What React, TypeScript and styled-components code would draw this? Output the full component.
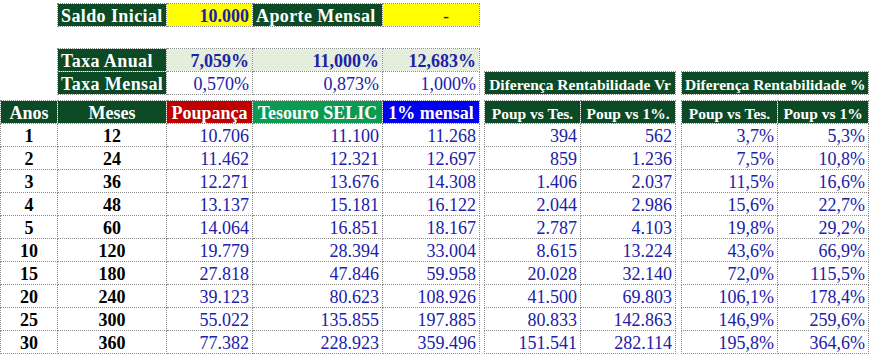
import React from 'react';
import styled, { createGlobalStyle } from 'styled-components';

const GlobalStyle = createGlobalStyle`
  body {
    margin: 0;
    background: #ffffff;
    font-family: 'Liberation Serif', 'Times New Roman', serif;
  }
`;

const DARK_GREEN = '#0b4a25';
const NAVY = '#2020a8';

type Row = [number, number, string, string, string, string, string, string, string];

const rows: Row[] = [
  [1, 12, '10.706', '11.100', '11.268', '394', '562', '3,7%', '5,3%'],
  [2, 24, '11.462', '12.321', '12.697', '859', '1.236', '7,5%', '10,8%'],
  [3, 36, '12.271', '13.676', '14.308', '1.406', '2.037', '11,5%', '16,6%'],
  [4, 48, '13.137', '15.181', '16.122', '2.044', '2.986', '15,6%', '22,7%'],
  [5, 60, '14.064', '16.851', '18.167', '2.787', '4.103', '19,8%', '29,2%'],
  [10, 120, '19.779', '28.394', '33.004', '8.615', '13.224', '43,6%', '66,9%'],
  [15, 180, '27.818', '47.846', '59.958', '20.028', '32.140', '72,0%', '115,5%'],
  [20, 240, '39.123', '80.623', '108.926', '41.500', '69.803', '106,1%', '178,4%'],
  [25, 300, '55.022', '135.855', '197.885', '80.833', '142.863', '146,9%', '259,6%'],
  [30, 360, '77.382', '228.923', '359.496', '151.541', '282.114', '195,8%', '364,6%'],
];

const widths = [57, 109, 86, 130, 97, 5, 96, 95, 6, 96, 91];

const App = () => {
  return (
    <>
      <GlobalStyle />
      <Sheet>
        <colgroup>
          {widths.map((w, i) => (
            <col key={i} style={{ width: w }} />
          ))}
        </colgroup>
        <tbody>
          <SheetRow $h={23}>
            <Blank />
            <Label>Saldo Inicial</Label>
            <Value $fill="#ffff00" $bold>10.000</Value>
            <Label>Aporte Mensal</Label>
            <Value $fill="#ffff00" $pad={30}>-</Value>
            <Blank colSpan={6} />
          </SheetRow>
          <SheetRow $h={22}>
            <Blank colSpan={11} />
          </SheetRow>
          <SheetRow $h={23}>
            <Blank />
            <Label>Taxa Anual</Label>
            <Value $fill="#e3eedb" $bold>7,059%</Value>
            <Value $fill="#e3eedb" $bold>11,000%</Value>
            <Value $fill="#e3eedb" $bold>12,683%</Value>
            <Blank colSpan={6} />
          </SheetRow>
          <SheetRow $h={23}>
            <Blank />
            <Label>Taxa Mensal</Label>
            <Value>0,570%</Value>
            <Value>0,873%</Value>
            <Value>1,000%</Value>
            <Blank />
            <SubHead colSpan={2}>Diferença Rentabilidade Vr</SubHead>
            <Blank />
            <SubHead colSpan={2}>Diferença Rentabilidade %</SubHead>
          </SheetRow>
          <SheetRow $h={6}>
            <Blank colSpan={11} />
          </SheetRow>
          <SheetRow $h={23}>
            <Head>Anos</Head>
            <Head>Meses</Head>
            <Head $fill="#c00000">Poupança</Head>
            <Head $fill="#0a9a50">Tesouro SELIC</Head>
            <Head $fill="#0000f0">1% mensal</Head>
            <Blank />
            <SubHead>Poup vs Tes.</SubHead>
            <SubHead>Poup vs 1%.</SubHead>
            <Blank />
            <SubHead>Poup vs Tes.</SubHead>
            <SubHead>Poup vs 1%</SubHead>
          </SheetRow>
          {rows.map((r) => (
            <SheetRow key={r[0]} $h={23}>
              <Key>{r[0]}</Key>
              <Key>{r[1]}</Key>
              <Value>{r[2]}</Value>
              <Value>{r[3]}</Value>
              <Value>{r[4]}</Value>
              <Blank />
              <Value>{r[5]}</Value>
              <Value>{r[6]}</Value>
              <Blank />
              <Value>{r[7]}</Value>
              <Value>{r[8]}</Value>
            </SheetRow>
          ))}
        </tbody>
      </Sheet>
    </>
  );
};

export default App;

const Sheet = styled.table`
  margin-top: 3px;
  table-layout: fixed;
  border-collapse: collapse;
  width: 868px;
  font-family: 'Liberation Serif', 'Times New Roman', serif;
  font-size: 18px;
`;

const SheetRow = styled.tr<{ $h: number }>`
  height: ${({ $h }) => $h}px;
`;

const Cell = styled.td`
  padding: 2px 3px 0;
  border: 1px dotted #8c8c8c;
  line-height: 19px;
  white-space: nowrap;
  overflow: hidden;
  vertical-align: middle;
`;

const Blank = styled.td`
  padding: 0;
  border: none;
`;

const Label = styled(Cell)`
  background: ${DARK_GREEN};
  color: #ffffff;
  font-weight: bold;
  text-align: left;
  letter-spacing: 0.4px;
`;

const Head = styled(Cell)<{ $fill?: string }>`
  background: ${({ $fill }) => $fill || DARK_GREEN};
  color: #ffffff;
  font-weight: bold;
  text-align: center;
`;

const SubHead = styled(Cell)`
  background: ${DARK_GREEN};
  color: #ffffff;
  font-weight: bold;
  font-size: 15.5px;
  text-align: center;
`;

const Value = styled(Cell)<{ $fill?: string; $bold?: boolean; $pad?: number }>`
  background: ${({ $fill }) => $fill || '#ffffff'};
  color: ${NAVY};
  font-weight: ${({ $bold }) => ($bold ? 'bold' : 'normal')};
  text-align: right;
  padding-right: ${({ $pad }) => $pad ?? 3}px;
`;

const Key = styled(Cell)`
  color: #000000;
  font-weight: bold;
  text-align: center;
`;
